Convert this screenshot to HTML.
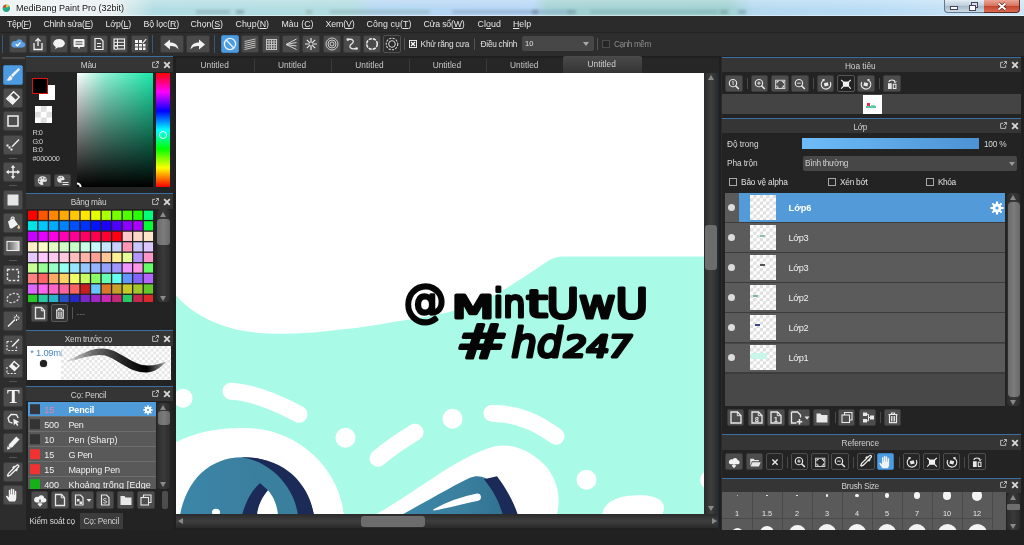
<!DOCTYPE html><html><head><meta charset="utf-8"><title>MediBang Paint Pro</title><style>
*{box-sizing:border-box;margin:0;padding:0}
html,body{width:1024px;height:545px;overflow:hidden;background:#2b2b2b;font-family:"Liberation Sans",sans-serif;font-size:11px;color:#d8d8d8}
.a{position:absolute}
.t{position:absolute;white-space:nowrap;line-height:1}
.btn{position:absolute;background:#4d4d4d;border-radius:2px;border:1px solid #3b3b3b}
.btn svg,.tb svg{position:absolute;left:-1px;top:-1px}
.tb{position:absolute;background:#4a4a4a;border-radius:2px;border:1px solid #383838}
.ptitle{position:absolute;background:#2e2e2e;border-top:1px solid #3f78a8;text-align:center;font-size:10px;color:#cfcfcf;line-height:13px;white-space:nowrap;height:14px}
.panel{position:absolute;background:#222}
u{text-decoration:underline}
</style></head><body><div style="position:absolute;left:0;top:0;width:1024px;height:545px;will-change:transform"><div class="a" style="left:0;top:0;width:1024px;height:15.500px;background:linear-gradient(90deg,#edf2f3 0,#e8eff1 11%,#cfe7ea 13%,#b2dde4 15%,#b1dce0 34.500%,#b4d6f2 36.500%,#b6d6f6 52%,#a2d1d3 53.500%,#9fd0d0 71%,#b4d9f0 73.500%,#b9dcf5 85%,#cde6f8 100%);overflow:hidden">
<div class="a" style="left:0;top:0;width:1024px;height:15.500px;background:linear-gradient(rgba(255,255,255,.25),rgba(255,255,255,0) 60%)"></div>
<div class="a" style="left:196px;top:10px;width:34px;height:3.500px;background:#86a4ac;opacity:.55;filter:blur(1.500px)"></div>
<div class="a" style="left:236px;top:10px;width:8px;height:3.500px;background:#6f8a92;opacity:.55;filter:blur(1.500px)"></div>
<div class="a" style="left:306px;top:10px;width:6px;height:3.500px;background:#8aa5a0;opacity:.55;filter:blur(1.500px)"></div>
<div class="a" style="left:330px;top:10px;width:100px;height:3.500px;background:#8fb2b8;opacity:.55;filter:blur(1.500px)"></div>
<div class="a" style="left:452px;top:10px;width:118px;height:3.500px;background:#8aa6c8;opacity:.55;filter:blur(1.500px)"></div>
<div class="a" style="left:532px;top:10px;width:6px;height:3.500px;background:#5a7088;opacity:.55;filter:blur(1.500px)"></div>
<div class="a" style="left:568px;top:10px;width:8px;height:3.500px;background:#5f8a90;opacity:.55;filter:blur(1.500px)"></div>
<div class="a" style="left:590px;top:10px;width:128px;height:3.500px;background:#7fb0b2;opacity:.55;filter:blur(1.500px)"></div>
<div class="a" style="left:720px;top:10px;width:8px;height:3.500px;background:#6a9092;opacity:.55;filter:blur(1.500px)"></div>
<div class="a" style="left:738px;top:10px;width:8px;height:3.500px;background:#6a9098;opacity:.55;filter:blur(1.500px)"></div>
<div class="a" style="left:0;top:14.500px;width:1024px;height:1px;background:rgba(255,255,255,.45)"></div>
<svg class="a" style="left:1px;top:2px" width="12" height="12" viewBox="0 0 12 12"><defs><linearGradient id="ai" x1="0" y1="0" x2="1" y2="1"><stop offset="0" stop-color="#35c070"/><stop offset="1" stop-color="#189a9a"/></linearGradient></defs><circle cx="5.500" cy="6" r="5" fill="#fff" opacity=".7"/><circle cx="5.300" cy="6.300" r="3.700" fill="url(#ai)"/><path d="M1.700 5.600A3.700 3.700 0 0 1 5 2.600L5.300 5.800Z" fill="#e0404c"/><path d="M5 2.600A3.700 3.700 0 0 1 8.300 4.300L5.300 5.800Z" fill="#f0d040"/></svg>
<div class="t" style="left:16.0px;top:3.8px;font-size:9.00px;color:#111;text-shadow:0 0 3px #fff,0 0 5px #fff;">MediBang Paint Pro (32bit)</div>
<div class="a" style="left:944px;top:0;width:19.500px;height:12.500px;border:1px solid #64788a;border-top:0;border-radius:0 0 0 4px;background:linear-gradient(#e4eef6,#bccddb 48%,#a3b9ca 52%,#cddce8)"><div class="a" style="left:5px;top:6px;width:8px;height:3.500px;background:#fff;border:1px solid #445"></div></div>
<div class="a" style="left:963px;top:0;width:21.500px;height:12.500px;border:1px solid #64788a;border-top:0;border-left:0;background:linear-gradient(#e4eef6,#bccddb 48%,#a3b9ca 52%,#cddce8)"><div class="a" style="left:8px;top:2px;width:7px;height:6px;background:#dde;border:1px solid #445"></div><div class="a" style="left:5.500px;top:4.500px;width:7px;height:6px;background:#fff;border:1px solid #445"></div></div>
<div class="a" style="left:984px;top:0;width:36px;height:12.500px;border:1px solid #5b2a22;border-top:0;border-left:0;border-radius:0 0 4px 0;background:linear-gradient(#eaa596,#d6735f 48%,#c2452e 52%,#da6a50)"><svg class="a" style="left:12.500px;top:2px" width="10" height="9" viewBox="0 0 10 9"><path d="M1.500 1.500l7 6M8.500 1.500l-7 6" stroke="#4a2020" stroke-width="3.200"/><path d="M1.500 1.500l7 6M8.500 1.500l-7 6" stroke="#fff" stroke-width="1.900"/></svg></div>
</div>
<div class="a" style="left:0;top:15.500px;width:1024px;height:17px;background:#2b2b2b"></div>
<div class="t" style="left:7.0px;top:19.9px;font-size:8.80px;color:#e6e6e6;letter-spacing:-0.40px;">Tệp(<u>F</u>)</div>
<div class="t" style="left:43.5px;top:19.9px;font-size:8.80px;color:#e6e6e6;letter-spacing:-0.24px;">Chỉnh sửa(<u>E</u>)</div>
<div class="t" style="left:105.5px;top:19.9px;font-size:8.80px;color:#e6e6e6;letter-spacing:-0.14px;">Lớp(<u>L</u>)</div>
<div class="t" style="left:143.5px;top:19.9px;font-size:8.80px;color:#e6e6e6;letter-spacing:-0.13px;">Bộ lọc(<u>R</u>)</div>
<div class="t" style="left:190.5px;top:19.9px;font-size:8.80px;color:#e6e6e6;letter-spacing:-0.04px;">Chọn(<u>S</u>)</div>
<div class="t" style="left:235.5px;top:19.9px;font-size:8.80px;color:#e6e6e6;letter-spacing:0.04px;">Chụp(<u>N</u>)</div>
<div class="t" style="left:281.5px;top:19.9px;font-size:8.80px;color:#e6e6e6;letter-spacing:0.03px;">Màu (<u>C</u>)</div>
<div class="t" style="left:325.5px;top:19.9px;font-size:8.80px;color:#e6e6e6;letter-spacing:-0.14px;">Xem(<u>V</u>)</div>
<div class="t" style="left:366.5px;top:19.9px;font-size:8.80px;color:#e6e6e6;letter-spacing:0.10px;">Công cụ(<u>T</u>)</div>
<div class="t" style="left:423.5px;top:19.9px;font-size:8.80px;color:#e6e6e6;letter-spacing:-0.23px;">Cửa sổ(<u>W</u>)</div>
<div class="t" style="left:477.5px;top:19.9px;font-size:8.80px;color:#e6e6e6;letter-spacing:0.10px;">Cl<u>o</u>ud</div>
<div class="t" style="left:513.0px;top:19.9px;font-size:8.80px;color:#e6e6e6;letter-spacing:-0.02px;"><u>H</u>elp</div>
<div class="a" style="left:0;top:32px;width:1024px;height:24px;background:#2d2d2d;border-top:1px solid #232323"></div>
<div class="a" style="left:2px;top:35px;width:1px;height:18px;background:#34597c"></div>
<div class="a" style="left:152px;top:35px;width:1px;height:18px;background:#34597c"></div>
<div class="a" style="left:214px;top:35px;width:1px;height:18px;background:#34597c"></div>
<div class="tb" style="left:9.0px;top:35px;width:18px;height:18px"><svg width="18" height="18" viewBox="0 0 18 18"><path d="M4.5 12.5h9a2.6 2.6 0 0 0 .4-5.2 3.6 3.6 0 0 0-6.8-1A3 3 0 0 0 4.5 12.500z" fill="#5aa0e6"/><path d="M6.8 9.2l1.6 1.6 3-3.200" stroke="#fff" stroke-width="1.400" fill="none"/></svg></div>
<div class="tb" style="left:29.2px;top:35px;width:18px;height:18px"><svg width="18" height="18" viewBox="0 0 18 18"><path d="M5 8v6.500h8V8" stroke="#f2f2f2" stroke-width="1.300" fill="none"/><path d="M9 11V4M6.500 6.200L9 3.600l2.500 2.600" stroke="#f2f2f2" stroke-width="1.300" fill="none"/></svg></div>
<div class="tb" style="left:49.5px;top:35px;width:18px;height:18px"><svg width="18" height="18" viewBox="0 0 18 18"><ellipse cx="9" cy="8.300" rx="5.800" ry="4.300" fill="#f2f2f2"/><path d="M6 11l-.8 3.200 3.400-2.400z" fill="#f2f2f2"/></svg></div>
<div class="tb" style="left:69.8px;top:35px;width:18px;height:18px"><svg width="18" height="18" viewBox="0 0 18 18"><rect x="3.500" y="4" width="11" height="8" rx="1" fill="#f2f2f2"/><path d="M8 12l1 2.200 1-2.200z" fill="#f2f2f2"/><path d="M5.500 6.800h7M5.500 9.200h7" stroke="#4a4a4a" stroke-width="1"/></svg></div>
<div class="tb" style="left:90.0px;top:35px;width:18px;height:18px"><svg width="18" height="18" viewBox="0 0 18 18"><path d="M5 3.500h5.500l2.500 2.500v8.500H5z" stroke="#f2f2f2" stroke-width="1.200" fill="none"/><path d="M7 8.500h4M7 11.500h4" stroke="#f2f2f2" stroke-width="1.100"/></svg></div>
<div class="tb" style="left:110.2px;top:35px;width:18px;height:18px"><svg width="18" height="18" viewBox="0 0 18 18"><rect x="4" y="4" width="10.500" height="10" stroke="#f2f2f2" stroke-width="1.100" fill="none"/><path d="M7.500 4v10M4 7.300h10.500M4 10.600h10.500" stroke="#f2f2f2" stroke-width="1"/><circle cx="6" cy="12.800" r="1.700" fill="#4a4a4a" stroke="#f2f2f2" stroke-width=".9"/></svg></div>
<div class="tb" style="left:130.5px;top:35px;width:18px;height:18px"><svg width="18" height="18" viewBox="0 0 18 18"><path d="M4 5h3v3H4zM8 5h3v3H8zM4 9h3v2.500H4zM8 9h3v2.500H8zM4 12.500h3V15H4zM8 12.500h3V15H8zM12 9h2.500v2.500H12zM12 12.500h2.500V15H12z" fill="#f2f2f2"/><path d="M11.500 7.500l3.200-3.800.9.800-3.200 3.700-1.300.5z" fill="#f2f2f2"/></svg></div>
<div class="tb" style="left:159.5px;top:35px;width:24px;height:18px"><svg width="24" height="18" viewBox="0 0 24 18"><path d="M4 9.500l6-5v3c5 0 8 2.500 8.500 7-1.800-2.600-4.500-3.600-8.500-3.400v3.400z" fill="#f2f2f2"/></svg></div>
<div class="tb" style="left:186px;top:35px;width:24px;height:18px"><svg width="24" height="18" viewBox="1 0 24 18"><path d="M20 9.500l-6-5v3c-5 0-8 2.500-8.500 7 1.800-2.600 4.500-3.600 8.500-3.400v3.400z" fill="#f2f2f2"/></svg></div>
<div class="tb" style="left:221.0px;top:35px;width:18px;height:18px;background:#4d9be0;border-color:#3f86c6;"><svg width="18" height="18" viewBox="0 0 18 18"><circle cx="9" cy="9" r="5.600" stroke="#eaf4ff" stroke-width="1.300" fill="none"/><path d="M5.200 5l7.600 8" stroke="#eaf4ff" stroke-width="1.300"/></svg></div>
<div class="tb" style="left:241.3px;top:35px;width:18px;height:18px;"><svg width="18" height="18" viewBox="0 0 18 18"><path d="M3.500 6.500l11-2.500M3.500 8.500l11-2.500M3.500 10.500l11-2.500M3.500 12.500l11-2.500M3.500 14.500l11-2.500" stroke="#d0d0d0" stroke-width=".9"/></svg></div>
<div class="tb" style="left:261.6px;top:35px;width:18px;height:18px;"><svg width="18" height="18" viewBox="0 0 18 18"><path d="M4.500 4v10.500M7 4v10.500M9.500 4v10.500M12 4v10.500M14.500 4v10.500M4 4.500h11M4 7h11M4 9.500h11M4 12h11M4 14.500h11" stroke="#c4c4c4" stroke-width="1"/></svg></div>
<div class="tb" style="left:281.9px;top:35px;width:18px;height:18px;"><svg width="18" height="18" viewBox="0 0 18 18"><path d="M4 9.500l10.500-5.500M4 9.500l10.500-2M4 9.500l10.500 1.500M4 9.500l10.500 5" stroke="#d6d6d6" stroke-width="1"/></svg></div>
<div class="tb" style="left:302.2px;top:35px;width:18px;height:18px;"><svg width="18" height="18" viewBox="0 0 18 18"><path d="M9 3v12M3 9h12M4.800 4.800l8.400 8.400M13.200 4.800l-8.400 8.400" stroke="#e8e8e8" stroke-width="1.200"/><circle cx="9" cy="9" r="1.600" fill="#4a4a4a"/></svg></div>
<div class="tb" style="left:322.5px;top:35px;width:18px;height:18px;"><svg width="18" height="18" viewBox="0 0 18 18"><circle cx="9" cy="9" r="6" stroke="#d8d8d8" stroke-width=".9" fill="none"/><circle cx="9" cy="9" r="4" stroke="#d8d8d8" stroke-width=".9" fill="none"/><circle cx="9" cy="9" r="2" stroke="#d8d8d8" stroke-width=".9" fill="none"/></svg></div>
<div class="tb" style="left:342.8px;top:35px;width:18px;height:18px;"><svg width="18" height="18" viewBox="0 0 18 18"><path d="M5 4.500c5-1 7 2 3.500 4.500s-1 6 5 4.500" stroke="#e8e8e8" stroke-width="1.300" fill="none"/><circle cx="4.800" cy="4.600" r="1.300" fill="#e8e8e8"/><circle cx="13.600" cy="13.500" r="1.300" fill="#e8e8e8"/></svg></div>
<div class="tb" style="left:363.1px;top:35px;width:18px;height:18px;"><svg width="18" height="18" viewBox="0 0 18 18"><circle cx="9" cy="9" r="5.300" stroke="#f0f0f0" stroke-width="1.500" fill="none" stroke-dasharray="3.200 1"/></svg></div>
<div class="tb" style="left:383.4px;top:35px;width:18px;height:18px;background:#2c2c2c;border-color:#505050;"><svg width="18" height="18" viewBox="0 0 18 18"><circle cx="9" cy="9" r="5.800" stroke="#d8d8d8" stroke-width="1.100" fill="none" stroke-dasharray="2.200 1.200"/><circle cx="9" cy="9" r="3.300" stroke="#d8d8d8" stroke-width="1" fill="none"/></svg></div>
<div class="a" style="left:404px;top:38px;width:1px;height:12px;background:#555"></div>
<div class="a" style="left:409px;top:40px;width:8px;height:8px;border:1px solid #e8e8e8;background:#2d2d2d"><svg class="a" style="left:0;top:0" width="6" height="6" viewBox="0 0 6 6"><path d="M1 1l4 4M5 1l-4 4" stroke="#fff" stroke-width="1.300"/></svg></div>
<div class="t" style="left:420.6px;top:40.1px;font-size:8.30px;color:#e0e0e0;letter-spacing:-0.23px;">Khử răng cưa</div>
<div class="a" style="left:474px;top:38px;width:1px;height:12px;background:#555"></div>
<div class="t" style="left:480.6px;top:40.1px;font-size:8.30px;color:#e0e0e0;letter-spacing:-0.27px;">Điều chỉnh</div>
<div class="a" style="left:522px;top:36px;width:72px;height:15px;background:#474747;border-radius:2px"><div class="t" style="left:3px;top:4px;font-size:7.5px;color:#e0e0e0">10</div><div class="a" style="left:61px;top:6px;border:3px solid transparent;border-top:4px solid #aaa;border-bottom:0"></div></div>
<div class="a" style="left:597px;top:38px;width:1px;height:12px;background:#555"></div>
<div class="a" style="left:602px;top:40px;width:8px;height:8px;border:1px solid #4a4a4a;background:#262626"></div>
<div class="t" style="left:614.0px;top:40.1px;font-size:8.30px;color:#8c8c8c;letter-spacing:-0.45px;">Cạnh mềm</div><div class="a" style="left:0;top:56px;width:26px;height:474px;background:#2d2d2d"></div>
<div class="a" style="left:2px;top:57px;width:23px;height:2px;background:#4a4a4a"></div>
<div class="a" style="left:26px;top:56px;width:147px;height:474px;background:#232323"></div>
<div class="btn" style="left:3px;top:64.5px;width:20px;height:20px;background:#4d9be0;border-color:#3c82c0;"><svg width="20" height="20" viewBox="0 0 20 20"><path d="M15.600 3l1.500 1.500-7.200 7.400-2-1.900z" fill="#f2f2f2"/><path d="M7.300 10.500l2.300 2.200c-.5 2.600-3.100 3.600-6.300 2.600 1.800-.7 1.800-3.100 4-4.800z" fill="#f2f2f2"/></svg></div>
<div class="btn" style="left:3px;top:87.9px;width:20px;height:20px;"><svg width="20" height="20" viewBox="0 0 20 20"><path d="M10.600 3.800l5.600 5.200-6.600 7-5.800-5.200z" fill="none" stroke="#f2f2f2" stroke-width="1.500"/><path d="M4.500 10.600l3.300-3.500 5.600 5.200-3.600 3.600z" fill="#f2f2f2"/></svg></div>
<div class="btn" style="left:3px;top:111.3px;width:20px;height:20px;"><svg width="20" height="20" viewBox="0 0 20 20"><rect x="5" y="5" width="10" height="10" fill="none" stroke="#e8e8e8" stroke-width="1.600"/></svg></div>
<div class="btn" style="left:3px;top:134.7px;width:20px;height:20px;"><svg width="20" height="20" viewBox="0 0 20 20"><path d="M15.500 4l1 1-6.500 6.800-1.600.5.600-1.500z" fill="#f2f2f2"/><rect x="3.500" y="9.500" width="2" height="2" fill="#f2f2f2"/><rect x="5.500" y="11.500" width="2" height="2" fill="#f2f2f2"/><rect x="7.500" y="13.500" width="2" height="2" fill="#f2f2f2"/></svg></div>
<div class="a" style="left:9px;top:157.9px;width:8px;height:1px;background:#555"></div>
<div class="btn" style="left:3px;top:161.5px;width:20px;height:20px;"><svg width="20" height="20" viewBox="0 0 20 20"><path d="M10 3l2.300 2.700h-1.600v3.600h3.600V7.700L17 10l-2.700 2.300v-1.600h-3.600v3.600h1.600L10 17l-2.300-2.700h1.600v-3.600H5.700v1.600L3 10l2.700-2.300v1.600h3.600V5.700H7.700z" fill="#f2f2f2"/></svg></div>
<div class="a" style="left:9px;top:184.7px;width:8px;height:1px;background:#555"></div>
<div class="btn" style="left:3px;top:189.5px;width:20px;height:20px;"><svg width="20" height="20" viewBox="0 0 20 20"><rect x="4.500" y="4.500" width="11" height="11" fill="#e6e6e6"/></svg></div>
<div class="btn" style="left:3px;top:212.9px;width:20px;height:20px;"><svg width="20" height="20" viewBox="0 0 20 20"><path d="M5 8.500l5.500-3.500 4.500 6.500-5.800 3.700c-1 .6-2 .3-2.600-.6z" fill="#f2f2f2"/><path d="M8.300 7.500c-1-3.500 2.300-5 3.200-1.800" stroke="#f2f2f2" stroke-width="1.100" fill="none"/><path d="M15.800 11.500c.9 1.600 1.300 2.500 1.300 3.100a1.300 1.300 0 0 1-2.600 0c0-.6.400-1.500 1.300-3.100z" fill="#e8c9a0"/></svg></div>
<div class="btn" style="left:3px;top:236.3px;width:20px;height:20px;"><svg width="20" height="20" viewBox="0 0 20 20"><defs><linearGradient id="gg" x1="0" y1="0" x2="1" y2="0"><stop offset="0" stop-color="#555"/><stop offset="1" stop-color="#ddd"/></linearGradient></defs><rect x="4" y="5.500" width="12" height="9" fill="url(#gg)" stroke="#e8e8e8" stroke-width="1.200"/></svg></div>
<div class="a" style="left:9px;top:259.5px;width:8px;height:1px;background:#555"></div>
<div class="btn" style="left:3px;top:264.5px;width:20px;height:20px;"><svg width="20" height="20" viewBox="0 0 20 20"><rect x="4.500" y="4.500" width="11" height="11" fill="none" stroke="#e0e0e0" stroke-width="1.400" stroke-dasharray="2.600 1.600"/></svg></div>
<div class="btn" style="left:3px;top:287.9px;width:20px;height:20px;"><svg width="20" height="20" viewBox="0 0 20 20"><ellipse cx="10" cy="10" rx="6.300" ry="4.300" transform="rotate(-22 10 10)" fill="none" stroke="#d8d8d8" stroke-width="1.300" stroke-dasharray="2.200 1.500"/></svg></div>
<div class="btn" style="left:3px;top:311.3px;width:20px;height:20px;"><svg width="20" height="20" viewBox="0 0 20 20"><path d="M4.500 15l7-7 1 1-7 7z" fill="#f2f2f2"/><path d="M13.500 3.500v2M13.500 8v2M10.700 6.800h2M14.700 6.800h2M11.500 4.800l1 1M15.500 4.800l-1 1M15.500 8.800l-1-1" stroke="#f2f2f2" stroke-width="1"/></svg></div>
<div class="btn" style="left:3px;top:334.7px;width:20px;height:20px;"><svg width="20" height="20" viewBox="0 0 20 20"><path d="M15.500 3.800l1 1-6.300 6.600-1.700.6.600-1.600z" fill="#f2f2f2"/><path d="M4 6.500h5M4 6.500v9h9.500v-4" fill="none" stroke="#e0e0e0" stroke-width="1.200" stroke-dasharray="2 1.400"/></svg></div>
<div class="btn" style="left:3px;top:358.1px;width:20px;height:20px;"><svg width="20" height="20" viewBox="0 0 20 20"><path d="M11.300 3.500l4.700 4.200-4.500 4.800-4.700-4.200z" fill="none" stroke="#f2f2f2" stroke-width="1.300"/><path d="M6.800 8.300l2.300-2.500 4.700 4.200-2.300 2.500z" fill="#f2f2f2"/><path d="M4 9v6.500h10" fill="none" stroke="#e0e0e0" stroke-width="1.200" stroke-dasharray="2 1.400"/></svg></div>
<div class="a" style="left:9px;top:381.3px;width:8px;height:1px;background:#555"></div>
<div class="btn" style="left:3px;top:386.5px;width:20px;height:20px;"><div class="t" style="left:3px;top:-1px;font-family:'Liberation Serif',serif;font-weight:bold;font-size:19px;color:#f2f2f2">T</div></div>
<div class="btn" style="left:3px;top:409.9px;width:20px;height:20px;"><svg width="20" height="20" viewBox="0 0 20 20"><path d="M9.500 13.200L6.300 12 5 8l3.300-3.700 5.200.4 1.700 3.300" fill="none" stroke="#f2f2f2" stroke-width="1.300" stroke-linejoin="round"/><path d="M10.300 8.800l6.200 3.200-2.500.8 1.400 2.500-1.300.7-1.400-2.500-1.900 1.800z" fill="#f2f2f2"/></svg></div>
<div class="btn" style="left:3px;top:433.3px;width:20px;height:20px;"><svg width="20" height="20" viewBox="0 0 20 20"><path d="M13.300 3.500l3.200 3-7.500 8-3.400.3.300-3.400z" fill="#f2f2f2"/><path d="M4 16.500l3.500-.5-3-3z" fill="#f2f2f2"/></svg></div>
<div class="a" style="left:9px;top:456.5px;width:8px;height:1px;background:#555"></div>
<div class="btn" style="left:3px;top:461.5px;width:20px;height:20px;"><svg width="20" height="20" viewBox="0 0 20 20"><path d="M13.800 3.300c1-1 2.700.7 1.700 1.700l-2 2 .7.700-1 1-.7-.7-5.300 5.300-2.200.9-.5-.5.900-2.200 5.300-5.300-.7-.7 1-1 .7.700z" fill="none" stroke="#f2f2f2" stroke-width="1.300"/></svg></div>
<div class="btn" style="left:3px;top:484.9px;width:20px;height:20px;"><svg width="20" height="20" viewBox="0 0 20 20"><path d="M6.300 16.500c-1.200-1.600-2.600-3.400-3.200-4.700-.4-.9.700-1.500 1.400-.7l1.300 1.500V5.500c0-1 1.500-1 1.500 0v4h.5V4.200c0-1 1.500-1 1.500 0v5.300h.5V4.800c0-1 1.500-1 1.500 0v5h.5V6.500c0-1 1.500-1 1.500 0v6c0 1.800-.5 2.800-1.300 4z" fill="#f2f2f2"/></svg></div>
<div class="a" style="left:26.0px;top:56.0px;width:147.0px;height:1px;background:#3a6f9f"></div><div class="a" style="left:26.0px;top:57.0px;width:147.0px;height:14.500px;background:#363535"></div><div class="t" style="left:80.8px;top:61.1px;font-size:8.30px;color:#d0d0d0;letter-spacing:-0.28px;">Màu</div><svg class="a" style="left:151.5px;top:60.5px" width="7" height="7" viewBox="0 0 8 8"><path d="M3.500 1.500H.7v5.800h5.800V4.500" fill="none" stroke="#bdbdbd" stroke-width="1.100"/><path d="M4.500 .5h3v3M7.300 .7L4 4" fill="none" stroke="#bdbdbd" stroke-width="1.100"/></svg><svg class="a" style="left:163.0px;top:60.5px" width="8" height="8" viewBox="0 0 8 8"><path d="M1.200 1.200l5.600 5.600M6.800 1.200L1.200 6.800" stroke="#d8d8d8" stroke-width="1.800"/></svg>
<div class="a" style="left:39px;top:84.500px;width:15.500px;height:15.500px;background:#fff"></div>
<div class="a" style="left:32px;top:77.700px;width:16.300px;height:16.300px;background:#000;border:1.500px solid #e01010"></div>
<div class="a" style="left:34.700px;top:105.600px;width:17.500px;height:17.300px;background:#fff;background-image:linear-gradient(45deg,#ddd 25%,transparent 25%,transparent 75%,#ddd 75%),linear-gradient(45deg,#ddd 25%,transparent 25%,transparent 75%,#ddd 75%);background-size:11.600px 11.600px;background-position:0 0,5.800px 5.800px"></div>
<div class="t" style="left:32.4px;top:129.2px;font-size:7.30px;color:#d0d0d0;letter-spacing:-0.45px;">R:0</div>
<div class="t" style="left:32.4px;top:137.7px;font-size:7.30px;color:#d0d0d0;letter-spacing:-0.49px;">G:0</div>
<div class="t" style="left:32.4px;top:145.9px;font-size:7.30px;color:#d0d0d0;letter-spacing:-0.32px;">B:0</div>
<div class="t" style="left:32.4px;top:154.5px;font-size:7.30px;color:#d0d0d0;letter-spacing:-0.15px;">#000000</div>
<div class="btn" style="left:33.800px;top:174px;width:17px;height:13px"><svg width="17" height="13" viewBox="0 0 17 13" style="left:-1px;top:-1px"><path d="M8.500 2.300a4.700 4.300 0 1 0 0 8.600c1.200 0 1-1.200.5-1.700-.6-.7 0-1.500.9-1.500h1.400c1 0 1.600-.6 1.600-1.500 0-2.300-2-3.900-4.400-3.900z" fill="#e8e8e8"/><circle cx="6" cy="5" r=".8" fill="#4d4d4d"/><circle cx="8.500" cy="4" r=".8" fill="#4d4d4d"/><circle cx="5.500" cy="7.500" r=".8" fill="#4d4d4d"/><circle cx="11" cy="5" r=".8" fill="#4d4d4d"/></svg></div>
<div class="btn" style="left:54px;top:174px;width:17px;height:13px"><svg width="17" height="13" viewBox="0 0 17 13" style="left:-1px;top:-1px"><path d="M7 1.800a3.800 3.500 0 1 0 0 7c1 0 .8-1 .4-1.400-.5-.6 0-1.200.7-1.200h1.200c.8 0 1.300-.5 1.300-1.200 0-1.900-1.600-3.200-3.600-3.200z" fill="#e8e8e8"/><circle cx="5" cy="4" r=".7" fill="#4d4d4d"/><circle cx="7.200" cy="3.300" r=".7" fill="#4d4d4d"/><path d="M8.500 8.500h6M8.500 10.500h6" stroke="#e8e8e8" stroke-width="1.200"/></svg></div>
<div class="a" style="left:76.500px;top:72.800px;width:76.600px;height:114.600px;background:linear-gradient(to top,#000,rgba(0,0,0,0)),linear-gradient(to right,#fff 0%,#8df2d4 38%,#1ce8aa 100%)"></div>
<svg class="a" style="left:76.500px;top:179.400px" width="8" height="8" viewBox="0 0 8 8"><circle cx="0" cy="8" r="3.600" fill="none" stroke="#fff" stroke-width="2"/></svg>
<div class="a" style="left:155.600px;top:72.800px;width:14.600px;height:114.600px;background:linear-gradient(to bottom,#ff0000 0%,#ff00ff 16.600%,#0000ff 33.300%,#00ffff 50%,#00ff00 66.600%,#ffff00 83.300%,#ff0000 100%)"></div>
<div class="a" style="left:158.800px;top:131.300px;width:8px;height:8px;border-radius:50%;border:1.600px solid #fff;background:rgba(0,255,220,.2)"></div>
<div class="a" style="left:26.0px;top:193.0px;width:147.0px;height:1px;background:#3a6f9f"></div><div class="a" style="left:26.0px;top:194.0px;width:147.0px;height:14.500px;background:#363535"></div><div class="t" style="left:70.8px;top:198.0px;font-size:8.30px;color:#d0d0d0;letter-spacing:-0.30px;">Bảng màu</div><svg class="a" style="left:151.5px;top:197.5px" width="7" height="7" viewBox="0 0 8 8"><path d="M3.500 1.500H.7v5.800h5.800V4.500" fill="none" stroke="#bdbdbd" stroke-width="1.100"/><path d="M4.500 .5h3v3M7.300 .7L4 4" fill="none" stroke="#bdbdbd" stroke-width="1.100"/></svg><svg class="a" style="left:163.0px;top:197.5px" width="8" height="8" viewBox="0 0 8 8"><path d="M1.200 1.200l5.600 5.600M6.800 1.200L1.200 6.800" stroke="#d8d8d8" stroke-width="1.800"/></svg>
<svg class="a" style="left:26px;top:208px" width="131" height="94" viewBox="0 0 131 94">
<rect x="2.00" y="2.70" width="9.200" height="9.200" fill="#ff0000"/>
<rect x="12.53" y="2.70" width="9.200" height="9.200" fill="#ff5500"/>
<rect x="23.06" y="2.70" width="9.200" height="9.200" fill="#ff8800"/>
<rect x="33.59" y="2.70" width="9.200" height="9.200" fill="#ffaa00"/>
<rect x="44.12" y="2.70" width="9.200" height="9.200" fill="#ffc800"/>
<rect x="54.65" y="2.70" width="9.200" height="9.200" fill="#ffe600"/>
<rect x="65.18" y="2.70" width="9.200" height="9.200" fill="#e6ff00"/>
<rect x="75.71" y="2.70" width="9.200" height="9.200" fill="#aaff00"/>
<rect x="86.24" y="2.70" width="9.200" height="9.200" fill="#78ff00"/>
<rect x="96.77" y="2.70" width="9.200" height="9.200" fill="#50ff00"/>
<rect x="107.30" y="2.70" width="9.200" height="9.200" fill="#28ff00"/>
<rect x="117.83" y="2.70" width="9.200" height="9.200" fill="#00ff78"/>
<rect x="2.00" y="13.23" width="9.200" height="9.200" fill="#00e6e6"/>
<rect x="12.53" y="13.23" width="9.200" height="9.200" fill="#00c8ff"/>
<rect x="23.06" y="13.23" width="9.200" height="9.200" fill="#00aaff"/>
<rect x="33.59" y="13.23" width="9.200" height="9.200" fill="#0082ff"/>
<rect x="44.12" y="13.23" width="9.200" height="9.200" fill="#0050ff"/>
<rect x="54.65" y="13.23" width="9.200" height="9.200" fill="#0032ff"/>
<rect x="65.18" y="13.23" width="9.200" height="9.200" fill="#0014ff"/>
<rect x="75.71" y="13.23" width="9.200" height="9.200" fill="#1e00ff"/>
<rect x="86.24" y="13.23" width="9.200" height="9.200" fill="#5000ff"/>
<rect x="96.77" y="13.23" width="9.200" height="9.200" fill="#8c00ff"/>
<rect x="107.30" y="13.23" width="9.200" height="9.200" fill="#aa00ff"/>
<rect x="117.83" y="13.23" width="9.200" height="9.200" fill="#00ff32"/>
<rect x="2.00" y="23.76" width="9.200" height="9.200" fill="#c800ff"/>
<rect x="12.53" y="23.76" width="9.200" height="9.200" fill="#e600ff"/>
<rect x="23.06" y="23.76" width="9.200" height="9.200" fill="#ff00e6"/>
<rect x="33.59" y="23.76" width="9.200" height="9.200" fill="#ff00b4"/>
<rect x="44.12" y="23.76" width="9.200" height="9.200" fill="#ff0096"/>
<rect x="54.65" y="23.76" width="9.200" height="9.200" fill="#ff0064"/>
<rect x="65.18" y="23.76" width="9.200" height="9.200" fill="#ff0050"/>
<rect x="75.71" y="23.76" width="9.200" height="9.200" fill="#ff0032"/>
<rect x="86.24" y="23.76" width="9.200" height="9.200" fill="#ff0014"/>
<rect x="96.77" y="23.76" width="9.200" height="9.200" fill="#ffc8c8"/>
<rect x="107.30" y="23.76" width="9.200" height="9.200" fill="#ffd7c8"/>
<rect x="117.83" y="23.76" width="9.200" height="9.200" fill="#ffe6c8"/>
<rect x="2.00" y="34.29" width="9.200" height="9.200" fill="#fff0c8"/>
<rect x="12.53" y="34.29" width="9.200" height="9.200" fill="#ffffc8"/>
<rect x="23.06" y="34.29" width="9.200" height="9.200" fill="#e6ffc8"/>
<rect x="33.59" y="34.29" width="9.200" height="9.200" fill="#d2ffc8"/>
<rect x="44.12" y="34.29" width="9.200" height="9.200" fill="#c8ffc8"/>
<rect x="54.65" y="34.29" width="9.200" height="9.200" fill="#c8ffe6"/>
<rect x="65.18" y="34.29" width="9.200" height="9.200" fill="#c8ffff"/>
<rect x="75.71" y="34.29" width="9.200" height="9.200" fill="#c8e6ff"/>
<rect x="86.24" y="34.29" width="9.200" height="9.200" fill="#c8d2ff"/>
<rect x="96.77" y="34.29" width="9.200" height="9.200" fill="#ff96b4"/>
<rect x="107.30" y="34.29" width="9.200" height="9.200" fill="#c8c8ff"/>
<rect x="117.83" y="34.29" width="9.200" height="9.200" fill="#dcc8ff"/>
<rect x="2.00" y="44.82" width="9.200" height="9.200" fill="#e6c8ff"/>
<rect x="12.53" y="44.82" width="9.200" height="9.200" fill="#ffc8ff"/>
<rect x="23.06" y="44.82" width="9.200" height="9.200" fill="#ffc8f0"/>
<rect x="33.59" y="44.82" width="9.200" height="9.200" fill="#ffc8dc"/>
<rect x="44.12" y="44.82" width="9.200" height="9.200" fill="#ffbebe"/>
<rect x="54.65" y="44.82" width="9.200" height="9.200" fill="#ffb4aa"/>
<rect x="65.18" y="44.82" width="9.200" height="9.200" fill="#ffa096"/>
<rect x="75.71" y="44.82" width="9.200" height="9.200" fill="#ffc896"/>
<rect x="86.24" y="44.82" width="9.200" height="9.200" fill="#fff096"/>
<rect x="96.77" y="44.82" width="9.200" height="9.200" fill="#e6ff96"/>
<rect x="107.30" y="44.82" width="9.200" height="9.200" fill="#b496ff"/>
<rect x="117.83" y="44.82" width="9.200" height="9.200" fill="#ff96c8"/>
<rect x="2.00" y="55.35" width="9.200" height="9.200" fill="#c8ff96"/>
<rect x="12.53" y="55.35" width="9.200" height="9.200" fill="#96ff96"/>
<rect x="23.06" y="55.35" width="9.200" height="9.200" fill="#96ffc8"/>
<rect x="33.59" y="55.35" width="9.200" height="9.200" fill="#96fff0"/>
<rect x="44.12" y="55.35" width="9.200" height="9.200" fill="#96e6ff"/>
<rect x="54.65" y="55.35" width="9.200" height="9.200" fill="#96c8ff"/>
<rect x="65.18" y="55.35" width="9.200" height="9.200" fill="#96b4ff"/>
<rect x="75.71" y="55.35" width="9.200" height="9.200" fill="#96a0ff"/>
<rect x="86.24" y="55.35" width="9.200" height="9.200" fill="#a096ff"/>
<rect x="96.77" y="55.35" width="9.200" height="9.200" fill="#f096ff"/>
<rect x="107.30" y="55.35" width="9.200" height="9.200" fill="#ff96e6"/>
<rect x="117.83" y="55.35" width="9.200" height="9.200" fill="#64ff64"/>
<rect x="2.00" y="65.88" width="9.200" height="9.200" fill="#ff8282"/>
<rect x="12.53" y="65.88" width="9.200" height="9.200" fill="#ff6464"/>
<rect x="23.06" y="65.88" width="9.200" height="9.200" fill="#ffaa64"/>
<rect x="33.59" y="65.88" width="9.200" height="9.200" fill="#ffd264"/>
<rect x="44.12" y="65.88" width="9.200" height="9.200" fill="#f0ff64"/>
<rect x="54.65" y="65.88" width="9.200" height="9.200" fill="#c8ff64"/>
<rect x="65.18" y="65.88" width="9.200" height="9.200" fill="#8cff64"/>
<rect x="75.71" y="65.88" width="9.200" height="9.200" fill="#64ffb4"/>
<rect x="86.24" y="65.88" width="9.200" height="9.200" fill="#64fff0"/>
<rect x="96.77" y="65.88" width="9.200" height="9.200" fill="#6496ff"/>
<rect x="107.30" y="65.88" width="9.200" height="9.200" fill="#8264ff"/>
<rect x="117.83" y="65.88" width="9.200" height="9.200" fill="#b464ff"/>
<rect x="2.00" y="76.41" width="9.200" height="9.200" fill="#dc64ff"/>
<rect x="12.53" y="76.41" width="9.200" height="9.200" fill="#ff64f0"/>
<rect x="23.06" y="76.41" width="9.200" height="9.200" fill="#ff64c8"/>
<rect x="33.59" y="76.41" width="9.200" height="9.200" fill="#ff64a0"/>
<rect x="44.12" y="76.41" width="9.200" height="9.200" fill="#ff6464"/>
<rect x="54.65" y="76.41" width="9.200" height="9.200" fill="#c81e1e"/>
<rect x="65.18" y="76.41" width="9.200" height="9.200" fill="#64c8ff"/>
<rect x="75.71" y="76.41" width="9.200" height="9.200" fill="#dc7828"/>
<rect x="86.24" y="76.41" width="9.200" height="9.200" fill="#c8a028"/>
<rect x="96.77" y="76.41" width="9.200" height="9.200" fill="#c8c828"/>
<rect x="107.30" y="76.41" width="9.200" height="9.200" fill="#a0c828"/>
<rect x="117.83" y="76.41" width="9.200" height="9.200" fill="#64c828"/>
<rect x="2.00" y="86.94" width="9.200" height="9.200" fill="#28c828"/>
<rect x="12.53" y="86.94" width="9.200" height="9.200" fill="#28c8a0"/>
<rect x="23.06" y="86.94" width="9.200" height="9.200" fill="#28b4c8"/>
<rect x="33.59" y="86.94" width="9.200" height="9.200" fill="#2850c8"/>
<rect x="44.12" y="86.94" width="9.200" height="9.200" fill="#2828c8"/>
<rect x="54.65" y="86.94" width="9.200" height="9.200" fill="#7828c8"/>
<rect x="65.18" y="86.94" width="9.200" height="9.200" fill="#a028c8"/>
<rect x="75.71" y="86.94" width="9.200" height="9.200" fill="#c828b4"/>
<rect x="86.24" y="86.94" width="9.200" height="9.200" fill="#c82878"/>
<rect x="96.77" y="86.94" width="9.200" height="9.200" fill="#28c864"/>
<rect x="107.30" y="86.94" width="9.200" height="9.200" fill="#c82850"/>
<rect x="117.83" y="86.94" width="9.200" height="9.200" fill="#dc2828"/>
</svg>
<div class="a" style="left:157px;top:209px;width:13px;height:93px;background:linear-gradient(90deg,#2c2c2c,#3a3a3a 50%,#2c2c2c);border-radius:4px"></div>
<div class="a" style="left:160.0px;top:212.0px;border:3.500px solid transparent;border-bottom:5px solid #8a8a8a;border-top:0"></div>
<div class="a" style="left:160.0px;top:295.5px;border:3.500px solid transparent;border-top:5px solid #8a8a8a;border-bottom:0"></div>
<div class="a" style="left:156.800px;top:219px;width:13px;height:25.500px;background:linear-gradient(90deg,#6a6a6a,#7c7c7c 50%,#686868);border-radius:3px"></div>
<div class="btn" style="left:30.600px;top:304.400px;width:17.400px;height:17.400px"><svg width="18" height="18" viewBox="0 0 18 18"><path d="M4.500 3.500h6l3 3V14.500H4.500z" fill="none" stroke="#e8e8e8" stroke-width="1.300"/><path d="M10.300 3.500v3.300h3.200" fill="none" stroke="#e8e8e8" stroke-width="1"/></svg></div>
<div class="btn" style="left:51.300px;top:304.400px;width:17px;height:17.400px;border-color:#5a5a5a;background:#333"><svg width="18" height="18" viewBox="0 0 18 18"><path d="M5 6h8M7.500 6V4.500h3V6M5.800 6.200v8h6.400v-8" fill="none" stroke="#e8e8e8" stroke-width="1.200"/><path d="M7.700 7.500v5.500M9 7.500v5.500M10.300 7.500v5.500" stroke="#e8e8e8" stroke-width=".9"/></svg></div>
<div class="a" style="left:72.300px;top:307px;width:1px;height:12px;background:#555"></div>
<div class="t" style="left:76.6px;top:309.5px;font-size:8.00px;color:#8a8a8a;letter-spacing:0.17px;">---</div>
<div class="a" style="left:26.0px;top:330.0px;width:147.0px;height:1px;background:#3a6f9f"></div><div class="a" style="left:26.0px;top:331.0px;width:147.0px;height:14.500px;background:#363535"></div><div class="t" style="left:64.8px;top:335.1px;font-size:8.30px;color:#d0d0d0;letter-spacing:-0.27px;">Xem trước cọ</div><svg class="a" style="left:151.5px;top:334.5px" width="7" height="7" viewBox="0 0 8 8"><path d="M3.500 1.500H.7v5.800h5.800V4.500" fill="none" stroke="#bdbdbd" stroke-width="1.100"/><path d="M4.500 .5h3v3M7.300 .7L4 4" fill="none" stroke="#bdbdbd" stroke-width="1.100"/></svg><svg class="a" style="left:163.0px;top:334.5px" width="8" height="8" viewBox="0 0 8 8"><path d="M1.200 1.200l5.600 5.600M6.800 1.200L1.200 6.800" stroke="#d8d8d8" stroke-width="1.800"/></svg>
<div class="a" style="left:26.600px;top:346.300px;width:34.600px;height:33.700px;background:#fff"></div>
<div class="a" style="left:61.200px;top:346.300px;width:110.300px;height:33.700px;background:#fff;background-image:linear-gradient(45deg,#e4e4e4 25%,transparent 25%,transparent 75%,#e4e4e4 75%),linear-gradient(45deg,#e4e4e4 25%,transparent 25%,transparent 75%,#e4e4e4 75%);background-size:5.600px 5.600px;background-position:0 0,2.800px 2.800px"></div>
<div class="a" style="left:26.600px;top:346.300px;width:35px;height:13px;overflow:hidden"><div class="t" style="left:3.6px;top:1.7px;font-size:9.40px;color:#4a86c4;letter-spacing:-0.22px;">* 1.09mm</div></div>
<div class="a" style="left:40.400px;top:360.100px;width:7px;height:7px;border-radius:50%;background:#222;box-shadow:0 0 1px #222"></div>
<svg class="a" style="left:61px;top:346px" width="111" height="34" viewBox="61 346 111 34"><defs><linearGradient id="bs" x1="0" y1="0" x2="1" y2="0"><stop offset="0" stop-color="#000" stop-opacity=".12"/><stop offset=".25" stop-color="#000" stop-opacity=".55"/><stop offset=".55" stop-color="#000" stop-opacity=".85"/><stop offset=".8" stop-color="#000" stop-opacity="1"/><stop offset="1" stop-color="#000" stop-opacity=".3"/></linearGradient><filter id="bb" x="-5%" y="-20%" width="110%" height="140%"><feGaussianBlur stdDeviation=".6"/></filter></defs><path filter="url(#bb)" d="M68 360.500 C80 355 90 348.500 102 348.500 C112 348.500 118 353 126 357.500 C134 362 140 365.500 148 365.500 C155 365.500 161 363.500 166.500 361.500 C161 367 155 372.500 146 372.500 C136 372.500 128 368 120 363 C112 358 107 355 100 355 C90 355 80 359 68 361.500Z" fill="url(#bs)"/></svg>
<div class="a" style="left:26.0px;top:385.5px;width:147.0px;height:1px;background:#3a6f9f"></div><div class="a" style="left:26.0px;top:386.5px;width:147.0px;height:14.500px;background:#363535"></div><div class="t" style="left:70.8px;top:390.6px;font-size:8.30px;color:#d0d0d0;letter-spacing:-0.24px;">Cọ: Pencil</div><svg class="a" style="left:151.5px;top:390.0px" width="7" height="7" viewBox="0 0 8 8"><path d="M3.500 1.500H.7v5.800h5.800V4.500" fill="none" stroke="#bdbdbd" stroke-width="1.100"/><path d="M4.500 .5h3v3M7.300 .7L4 4" fill="none" stroke="#bdbdbd" stroke-width="1.100"/></svg><svg class="a" style="left:163.0px;top:390.0px" width="8" height="8" viewBox="0 0 8 8"><path d="M1.200 1.200l5.600 5.600M6.800 1.200L1.200 6.800" stroke="#d8d8d8" stroke-width="1.800"/></svg>
<div class="a" style="left:28px;top:402.300px;width:127.600px;height:86.700px;overflow:hidden;background:repeating-linear-gradient(to bottom,#595959 0,#595959 14.200px,#6d6d6d 14.300px,#6d6d6d 14.850px,#595959 14.950px)">
<div class="a" style="left:0;top:0;width:128px;height:14.500px;background:linear-gradient(to bottom,#4f9ad9 0,#4f9ad9 14.300px,rgba(79,154,217,0) 14.500px)"></div>
<div class="a" style="left:0;top:0.00px;width:128px;height:14.400px">
<svg class="a" style="left:0;top:0" width="14" height="14"><rect x="2" y="2.200" width="10" height="10" fill="#33373d"/></svg>
<div class="t" style="left:16.2px;top:3.9px;font-size:9.00px;color:#e58aa0;letter-spacing:0.10px;">15</div>
<div class="t" style="left:40.4px;top:3.9px;font-size:9.00px;color:#fff;font-weight:bold;letter-spacing:-0.12px;">Pencil</div>
<svg class="a" style="left:115px;top:2.500px" width="10" height="10" viewBox="0 0 10 10"><circle cx="5" cy="5" r="2.300" fill="none" stroke="#fff" stroke-width="1.800"/><path d="M5 .3v9.400M.3 5h9.400M1.700 1.700l6.600 6.600M8.300 1.700L1.700 8.300" stroke="#fff" stroke-width="1.500"/><circle cx="5" cy="5" r="1.100" fill="#4f9ad9"/></svg>
</div>
<div class="a" style="left:0;top:14.95px;width:128px;height:14.400px">
<svg class="a" style="left:0;top:0" width="14" height="14"><rect x="2" y="2.200" width="10" height="10" fill="#333"/></svg>
<div class="t" style="left:16.2px;top:3.9px;font-size:9.00px;color:#f0f0f0;letter-spacing:-0.07px;">500</div>
<div class="t" style="left:40.4px;top:3.9px;font-size:9.00px;color:#f0f0f0;letter-spacing:-0.37px;">Pen</div>
</div>
<div class="a" style="left:0;top:29.90px;width:128px;height:14.400px">
<svg class="a" style="left:0;top:0" width="14" height="14"><rect x="2" y="2.200" width="10" height="10" fill="#333"/></svg>
<div class="t" style="left:16.2px;top:3.9px;font-size:9.00px;color:#f0f0f0;letter-spacing:0.10px;">10</div>
<div class="t" style="left:40.4px;top:3.9px;font-size:9.00px;color:#f0f0f0;letter-spacing:0.06px;">Pen (Sharp)</div>
</div>
<div class="a" style="left:0;top:44.85px;width:128px;height:14.400px">
<svg class="a" style="left:0;top:0" width="14" height="14"><rect x="2" y="2.200" width="10" height="10" fill="#f03232"/></svg>
<div class="t" style="left:16.2px;top:3.9px;font-size:9.00px;color:#f0f0f0;letter-spacing:0.10px;">15</div>
<div class="t" style="left:40.4px;top:3.9px;font-size:9.00px;color:#f0f0f0;letter-spacing:-0.32px;">G Pen</div>
</div>
<div class="a" style="left:0;top:59.80px;width:128px;height:14.400px">
<svg class="a" style="left:0;top:0" width="14" height="14"><rect x="2" y="2.200" width="10" height="10" fill="#f03232"/></svg>
<div class="t" style="left:16.2px;top:3.9px;font-size:9.00px;color:#f0f0f0;letter-spacing:0.10px;">15</div>
<div class="t" style="left:40.4px;top:3.9px;font-size:9.00px;color:#f0f0f0;letter-spacing:-0.13px;">Mapping Pen</div>
</div>
<div class="a" style="left:0;top:74.75px;width:128px;height:14.400px">
<svg class="a" style="left:0;top:0" width="14" height="14"><rect x="2" y="2.200" width="10" height="10" fill="#18b018"/></svg>
<div class="t" style="left:16.2px;top:3.9px;font-size:9.00px;color:#f0f0f0;letter-spacing:-0.07px;">400</div>
<div class="t" style="left:40.4px;top:3.9px;font-size:9.00px;color:#f0f0f0;letter-spacing:0.14px;">Khoảng trống [Edge</div>
</div>
</div>
<div class="a" style="left:157px;top:402.500px;width:13px;height:86.500px;background:linear-gradient(90deg,#2c2c2c,#3a3a3a 50%,#2c2c2c);border-radius:4px"></div>
<div class="a" style="left:160.0px;top:404.5px;border:3.500px solid transparent;border-bottom:5px solid #8a8a8a;border-top:0"></div>
<div class="a" style="left:160.0px;top:482.0px;border:3.500px solid transparent;border-top:5px solid #8a8a8a;border-bottom:0"></div>
<div class="a" style="left:157.500px;top:411.400px;width:12px;height:14px;background:linear-gradient(90deg,#6a6a6a,#7c7c7c 50%,#686868);border-radius:3px"></div>
<div class="btn" style="left:30.5px;top:491px;width:17.5px;height:17.500px"><svg width="18" height="18" viewBox="0 0 18 18"><path d="M5 11.500h8a2.300 2.300 0 0 0 .3-4.600 3.200 3.200 0 0 0-6-.9A2.700 2.700 0 0 0 5 11.500z" fill="#f2f2f2"/><path d="M9 9v5.500M7 12.500l2 2.300 2-2.300" stroke="#f2f2f2" stroke-width="1.400" fill="none"/><path d="M9 8.500v3" stroke="#4d4d4d" stroke-width="1.400"/></svg></div>
<div class="btn" style="left:51.0px;top:491px;width:17.5px;height:17.500px"><svg width="18" height="18" viewBox="0 0 18 18"><path d="M4.500 3.500h6l3 3V14.500H4.500z" fill="none" stroke="#e8e8e8" stroke-width="1.300"/><path d="M10.300 3.500v3.300h3.200" fill="none" stroke="#e8e8e8" stroke-width="1"/></svg></div>
<div class="btn" style="left:71.2px;top:491px;width:23.0px;height:17.500px"><svg width="24" height="18" viewBox="0 0 24 18"><path d="M4.500 4h5l2.500 2.500V14H4.500z" fill="none" stroke="#e8e8e8" stroke-width="1.200"/><rect x="6" y="8" width="2.500" height="2.500" fill="#e8e8e8"/><rect x="8.500" y="10.500" width="2.500" height="2.500" fill="#e8e8e8"/><path d="M15.500 8h5l-2.500 3z" fill="#e8e8e8"/></svg></div>
<div class="btn" style="left:96.3px;top:491px;width:17.5px;height:17.500px"><svg width="18" height="18" viewBox="0 0 18 18"><path d="M5.500 4h5l2.500 2.500V14H5.500z" fill="none" stroke="#e8e8e8" stroke-width="1.200"/><path d="M10.500 8c-1.500-1-3.200-.3-3 .8.300 1.500 3 .6 3.100 2.100.1 1.200-1.900 1.600-3.300.6" fill="none" stroke="#e8e8e8" stroke-width="1"/></svg></div>
<div class="btn" style="left:116.7px;top:491px;width:17.5px;height:17.500px"><svg width="18" height="18" viewBox="0 0 18 18"><path d="M3.500 5h4l1 1.500h6v7.500h-11z" fill="#e8e8e8"/></svg></div>
<div class="btn" style="left:137.0px;top:491px;width:17.5px;height:17.500px"><svg width="18" height="18" viewBox="0 0 18 18"><rect x="4" y="6.500" width="7.500" height="7.500" fill="none" stroke="#e8e8e8" stroke-width="1.100"/><path d="M6.500 6.500V4H14v7.500h-2.500" fill="none" stroke="#e8e8e8" stroke-width="1.100"/></svg></div>
<div class="a" style="left:162px;top:491px;width:6px;height:17.500px;background:#4d4d4d;border-radius:2px"></div>
<div class="a" style="left:26px;top:511px;width:147px;height:19px;background:#232323"></div>
<div class="a" style="left:80px;top:513px;width:43px;height:16px;background:#3c3c3c"></div>
<div class="t" style="left:29.5px;top:516.9px;font-size:8.30px;color:#d8d8d8;letter-spacing:-0.21px;">Kiểm soát cọ</div>
<div class="t" style="left:83.5px;top:517.4px;font-size:8.30px;color:#d0d0d0;letter-spacing:-0.23px;">Cọ: Pencil</div>
<div class="a" style="left:0;top:530px;width:1024px;height:15px;background:#212121"></div><div class="a" style="left:173px;top:56px;width:548px;height:474px;background:#1f1f1f"></div>
<div class="a" style="left:176px;top:58px;width:543px;height:15px;background:#262626"></div>
<div class="a" style="left:253.9px;top:59px;width:1px;height:13px;background:#3a3a3a"></div>
<div class="t" style="left:200.5px;top:61.4px;font-size:8.30px;color:#c8c8c8;letter-spacing:0.03px;">Untitled</div>
<div class="a" style="left:331.3px;top:59px;width:1px;height:13px;background:#3a3a3a"></div>
<div class="t" style="left:277.9px;top:61.4px;font-size:8.30px;color:#c8c8c8;letter-spacing:0.03px;">Untitled</div>
<div class="a" style="left:408.7px;top:59px;width:1px;height:13px;background:#3a3a3a"></div>
<div class="t" style="left:355.3px;top:61.4px;font-size:8.30px;color:#c8c8c8;letter-spacing:0.03px;">Untitled</div>
<div class="a" style="left:486.1px;top:59px;width:1px;height:13px;background:#3a3a3a"></div>
<div class="t" style="left:432.7px;top:61.4px;font-size:8.30px;color:#c8c8c8;letter-spacing:0.03px;">Untitled</div>
<div class="a" style="left:563.5px;top:59px;width:1px;height:13px;background:#3a3a3a"></div>
<div class="t" style="left:510.1px;top:61.4px;font-size:8.30px;color:#c8c8c8;letter-spacing:0.03px;">Untitled</div>
<div class="a" style="left:563.400px;top:56px;width:78.200px;height:16.700px;background:linear-gradient(#4a4a4a,#343434);border-radius:2px 2px 0 0"></div>
<div class="t" style="left:587.5px;top:60.4px;font-size:8.30px;color:#d0d0d0;letter-spacing:0.03px;">Untitled</div>
<svg class="a" style="left:176px;top:72.700px" width="528" height="441.700" viewBox="176 72.700 528 441.700">
<defs><linearGradient id="tl" x1="0" y1="0" x2="1" y2="0"><stop offset="0" stop-color="#3a86a8"/><stop offset=".6" stop-color="#3a7f9e"/><stop offset="1" stop-color="#2f6f8e"/></linearGradient><filter id="sf" x="-5%" y="-5%" width="110%" height="110%"><feGaussianBlur stdDeviation="0.700"/></filter></defs>
<rect x="176" y="72" width="528" height="443" fill="#fff"/>
<path d="M176 295 C190 312 215 325 240 330 C265 335 300 334 326 331 C350 328.500 370 326 389 322.500 C410 319 430 316 446 312.500 C456 310 464 308 470 306 C492 298 520 280 546 262 Q553 257 562 256.300 L704 256.300 L704 515 L176 515Z" fill="#a9fbe7"/>
<g filter="url(#sf)">
<circle cx="183" cy="398" r="9.500" fill="#fff"/>
<path d="M231 391 C255 392 280 404 299 414" stroke="#fff" stroke-width="17" stroke-linecap="round" fill="none"/>
<circle cx="345.500" cy="437.500" r="10" fill="#fff"/>
<path d="M378 458 C392 446 402 440 415 432" stroke="#fff" stroke-width="17" stroke-linecap="round" fill="none"/>
<circle cx="452.500" cy="418.500" r="10" fill="#fff"/>
<path d="M492 413 C520 413 540 424 556 436" stroke="#fff" stroke-width="17" stroke-linecap="round" fill="none"/>
<circle cx="586.500" cy="479.500" r="10" fill="#fff"/>
<circle cx="709" cy="479.500" r="9" fill="#fff"/>
<path d="M602 515 C604 500 620 495 640 495 C660 495 668 503 662 515Z" fill="#fff"/>
<path d="M176 442 C200 430 225 427 250 428 C300 430 340 470 344 515 L176 515Z" fill="#fff"/>
<path d="M376 514 C400 500 420 486 434.600 476.600 C455 463 475 452 493 446.500 C510 442 528 449 542 462 C556 475 562 495 556.700 515 L376 515Z" fill="#fff"/>
<path d="M180 515 C186 480 210 457 242 457 C262 457 280 470 292 490 L300 515Z" fill="url(#tl)"/>
<path d="M255 458 C290 462 310 488 314 515 L290 515 C292 500 280 470 255 458Z" fill="#1a2b58"/>
<path d="M242 457 C275 455 308 480 314 515 L286 515 C284 490 268 465 242 457Z" fill="#1a2b58"/>
<path d="M242 457 C274 462 295 490 298 515 L240 515 L262 484Z" fill="#3b7f9f"/>
<path d="M242 515 C246 500 252 490 260 483 L268 490 C262 498 258 506 257 515Z" fill="#1a2b58"/>
<path d="M257 515 C258 505 262 497 268 490 C274 497 277 505 278 515Z" fill="#fff"/>
<ellipse cx="216" cy="512" rx="4" ry="3.500" fill="#fff"/>
<path d="M401 515 C425 502 452 486 470 477.500 C475 475 481 475.500 486 478 L509 515Z" fill="url(#tl)"/>
<path d="M484 479 L497 476 C506 488 513 500 518 515 L503 515 C499 501 493 490 484 479Z" fill="#1a2b58"/>
<path d="M434 509.500 C446 503 462 497 477 494 C481 494 481.500 499 477 500 C462 503 448 507 434 509.500Z" fill="#fff" stroke="#fff" stroke-width="1.500" stroke-linejoin="round"/>
</g>
<g font-family="'DejaVu Sans','Liberation Sans',sans-serif" fill="#050505" stroke="#050505" stroke-linejoin="round" stroke-linecap="round" stroke-width="3.200">
<text y="318" font-size="41"><tspan x="404" y="316" font-size="44" textLength="42" lengthAdjust="spacingAndGlyphs">@</tspan><tspan x="452" y="317.500" font-size="32" textLength="42" lengthAdjust="spacingAndGlyphs">M</tspan><tspan x="493.500" y="317" textLength="32" font-size="39" lengthAdjust="spacingAndGlyphs">in</tspan><tspan x="526.500" y="317" textLength="21" font-size="38" lengthAdjust="spacingAndGlyphs">t</tspan><tspan x="546.500" y="318" textLength="101.500" lengthAdjust="spacingAndGlyphs">UwU</tspan></text>
<text y="357" font-size="41" font-style="oblique"><tspan x="456" y="358" font-size="46" textLength="52" lengthAdjust="spacingAndGlyphs">#</tspan><tspan x="511.500" y="357" textLength="51" lengthAdjust="spacingAndGlyphs">hd</tspan><tspan x="564" y="357" font-size="30" textLength="68" lengthAdjust="spacingAndGlyphs">247</tspan></text>
</g>
</svg>
<div class="a" style="left:704px;top:72.700px;width:14px;height:441.700px;background:linear-gradient(90deg,#2a2a2a,#3e3e3e 50%,#2a2a2a)"></div>
<div class="a" style="left:707.5px;top:75.0px;border:3.500px solid transparent;border-bottom:5px solid #8a8a8a;border-top:0"></div>
<div class="a" style="left:707.5px;top:506.0px;border:3.500px solid transparent;border-top:5px solid #8a8a8a;border-bottom:0"></div>
<div class="a" style="left:705px;top:224.800px;width:12.200px;height:45.200px;background:#6c6c6c;border-radius:3px"></div>
<div class="a" style="left:176px;top:514.400px;width:543px;height:13.800px;background:linear-gradient(#2a2a2a,#3e3e3e 50%,#2a2a2a)"></div>
<div class="a" style="left:178.0px;top:517.8px;border:3.500px solid transparent;border-right:5px solid #8a8a8a;border-left:0"></div>
<div class="a" style="left:712.0px;top:517.8px;border:3.500px solid transparent;border-left:5px solid #8a8a8a;border-right:0"></div>
<div class="a" style="left:361px;top:515.600px;width:63.700px;height:11.600px;background:#6c6c6c;border-radius:3px"></div>
<div class="a" style="left:718px;top:72px;width:1px;height:458px;background:#1f2a35"></div><div class="a" style="left:721.500px;top:56px;width:300px;height:474px;background:#232323"></div>
<div class="a" style="left:1021px;top:56px;width:3px;height:474px;background:#1f1f1f"></div>
<div class="a" style="left:721.5px;top:56.5px;width:299.5px;height:1px;background:#3a6f9f"></div><div class="a" style="left:721.5px;top:57.5px;width:299.5px;height:14.500px;background:#363535"></div><div class="t" style="left:844.9px;top:61.6px;font-size:8.30px;color:#d0d0d0;letter-spacing:-0.03px;">Hoa tiêu</div><svg class="a" style="left:999.5px;top:61.0px" width="7" height="7" viewBox="0 0 8 8"><path d="M3.500 1.500H.7v5.800h5.800V4.500" fill="none" stroke="#bdbdbd" stroke-width="1.100"/><path d="M4.500 .5h3v3M7.300 .7L4 4" fill="none" stroke="#bdbdbd" stroke-width="1.100"/></svg><svg class="a" style="left:1011.0px;top:61.0px" width="8" height="8" viewBox="0 0 8 8"><path d="M1.200 1.200l5.600 5.600M6.800 1.200L1.200 6.800" stroke="#d8d8d8" stroke-width="1.800"/></svg>
<div class="btn" style="left:725.0px;top:74.800px;width:17.600px;height:17.400px;"><svg width="18" height="18" viewBox="-1.300 -1.500 20.600 20.600"><circle cx="7.800" cy="7.800" r="4.200" fill="none" stroke="#e8e8e8" stroke-width="1.300"/><path d="M10.800 10.800l3.700 3.700" stroke="#e8e8e8" stroke-width="1.800"/><path d="M7 6.300l1-.7v4.400" stroke="#e8e8e8" stroke-width="1" fill="none"/></svg></div>
<div class="a" style="left:746.5px;top:78.0px;width:1px;height:11px;background:#4a4a4a"></div>
<div class="btn" style="left:750.7px;top:74.800px;width:17.600px;height:17.400px;"><svg width="18" height="18" viewBox="-1.300 -1.500 20.600 20.600"><circle cx="7.800" cy="7.800" r="4.200" fill="none" stroke="#e8e8e8" stroke-width="1.300"/><path d="M10.800 10.800l3.700 3.700" stroke="#e8e8e8" stroke-width="1.800"/><path d="M5.800 7.800h4M7.800 5.800v4" stroke="#e8e8e8" stroke-width="1.100"/></svg></div>
<div class="btn" style="left:771.0px;top:74.800px;width:17.600px;height:17.400px;"><svg width="18" height="18" viewBox="-1.300 -1.500 20.600 20.600"><rect x="4" y="4.500" width="10.500" height="9.500" fill="none" stroke="#d8d8d8" stroke-width="1.100"/><path d="M5.500 8V6h2M13 8V6h-2M5.500 10.500v2h2M13 10.500v2h-2" stroke="#e8e8e8" stroke-width="1.100" fill="none"/></svg></div>
<div class="btn" style="left:791.0px;top:74.800px;width:17.600px;height:17.400px;"><svg width="18" height="18" viewBox="-1.300 -1.500 20.600 20.600"><circle cx="7.800" cy="7.800" r="4.200" fill="none" stroke="#e8e8e8" stroke-width="1.300"/><path d="M10.800 10.800l3.700 3.700" stroke="#e8e8e8" stroke-width="1.800"/><path d="M5.800 7.800h4" stroke="#e8e8e8" stroke-width="1.100"/></svg></div>
<div class="a" style="left:812.5px;top:78.0px;width:1px;height:11px;background:#4a4a4a"></div>
<div class="btn" style="left:816.8px;top:74.800px;width:17.600px;height:17.400px;"><svg width="18" height="18" viewBox="-1.300 -1.500 20.600 20.600"><path d="M13.800 6.500A5.500 5.500 0 1 1 7 4" fill="none" stroke="#e8e8e8" stroke-width="1.300"/><path d="M4.500 3l3.200.3-1 3z" fill="#e8e8e8"/><path d="M6.500 8l4.500-1.200 1 3.700-4.500 1.200z" fill="#e8e8e8"/></svg></div>
<div class="btn" style="left:837.0px;top:74.800px;width:17.600px;height:17.400px;background:#222;border-color:#555;"><svg width="18" height="18" viewBox="-1.300 -1.500 20.600 20.600"><rect x="5.500" y="6" width="7" height="6" fill="#f2f2f2"/><path d="M3.500 4l2.500 2.500M14.500 4L12 6.500M3.500 14L6 11.500M14.500 14L12 11.500" stroke="#f2f2f2" stroke-width="1.300"/></svg></div>
<div class="btn" style="left:857.0px;top:74.800px;width:17.600px;height:17.400px;"><svg width="18" height="18" viewBox="-1.300 -1.500 20.600 20.600"><path d="M4.200 6.500A5.500 5.500 0 1 0 11 4" fill="none" stroke="#e8e8e8" stroke-width="1.300"/><path d="M13.500 3l-3.200.3 1 3z" fill="#e8e8e8"/><path d="M11.500 8L7 6.800l-1 3.700 4.500 1.200z" fill="#e8e8e8"/></svg></div>
<div class="a" style="left:878.5px;top:78.0px;width:1px;height:11px;background:#4a4a4a"></div>
<div class="btn" style="left:883.0px;top:74.800px;width:17.600px;height:17.400px;"><svg width="18" height="18" viewBox="-1.300 -1.500 20.600 20.600"><path d="M5 8v6h3V8M10.500 9v5h3V9z" fill="none" stroke="#e8e8e8" stroke-width="1.200"/><rect x="5" y="8" width="3" height="6" fill="#e8e8e8"/><path d="M5.500 6.500C6 3.500 12 3.500 12.500 6.500" fill="none" stroke="#e8e8e8" stroke-width="1.200"/><path d="M11 6l1.600 1.500L14 5.800" fill="none" stroke="#e8e8e8" stroke-width="1"/></svg></div>
<div class="a" style="left:721.500px;top:94.300px;width:299.500px;height:20px;background:#444"></div>
<div class="a" style="left:863px;top:95px;width:19px;height:19px;background:#fff"><div class="a" style="left:4px;top:8px;width:3px;height:3px;background:#e0334a"></div><div class="a" style="left:3px;top:11px;width:10px;height:1.500px;background:#58c8a0"></div><div class="a" style="left:8px;top:9.500px;width:4px;height:1.500px;background:#7fd8c0"></div></div>
<div class="a" style="left:721.5px;top:117.5px;width:299.5px;height:1px;background:#3a6f9f"></div><div class="a" style="left:721.5px;top:118.5px;width:299.5px;height:14.500px;background:#363535"></div><div class="t" style="left:853.5px;top:122.5px;font-size:8.30px;color:#d0d0d0;letter-spacing:-0.39px;">Lớp</div><svg class="a" style="left:999.5px;top:122.0px" width="7" height="7" viewBox="0 0 8 8"><path d="M3.500 1.500H.7v5.800h5.800V4.500" fill="none" stroke="#bdbdbd" stroke-width="1.100"/><path d="M4.500 .5h3v3M7.300 .7L4 4" fill="none" stroke="#bdbdbd" stroke-width="1.100"/></svg><svg class="a" style="left:1011.0px;top:122.0px" width="8" height="8" viewBox="0 0 8 8"><path d="M1.200 1.200l5.600 5.600M6.800 1.200L1.200 6.800" stroke="#d8d8d8" stroke-width="1.800"/></svg>
<div class="a" style="left:721.500px;top:117.500px;width:299.500px;height:1.500px;background:#3a6f9f"></div>
<div class="t" style="left:727.0px;top:140.3px;font-size:8.30px;color:#d8d8d8;letter-spacing:-0.04px;">Độ trong</div>
<div class="a" style="left:802px;top:138px;width:176.500px;height:11.300px;background:linear-gradient(90deg,#6ebcf8,#4c92d4)"></div>
<div class="t" style="left:984.0px;top:140.3px;font-size:8.30px;color:#d8d8d8;letter-spacing:-0.25px;">100 %</div>
<div class="t" style="left:727.0px;top:159.0px;font-size:8.30px;color:#d8d8d8;letter-spacing:-0.10px;">Pha trộn</div>
<div class="a" style="left:802.800px;top:155.600px;width:214.600px;height:15px;background:#474747;border-radius:2px"></div>
<div class="t" style="left:805.0px;top:159.0px;font-size:8.30px;color:#d0d0d0;letter-spacing:-0.32px;">Bình thường</div>
<div class="a" style="left:1008.700px;top:161.500px;border:3px solid transparent;border-top:4px solid #999;border-bottom:0"></div>
<div class="a" style="left:729.0px;top:178.400px;width:8px;height:8px;border:1px solid #a8a8a8;background:#232323"></div>
<div class="t" style="left:741.0px;top:178.3px;font-size:8.30px;color:#e0e0e0;letter-spacing:-0.15px;">Bảo vệ alpha</div>
<div class="a" style="left:828.0px;top:178.400px;width:8px;height:8px;border:1px solid #a8a8a8;background:#232323"></div>
<div class="t" style="left:840.0px;top:178.3px;font-size:8.30px;color:#e0e0e0;letter-spacing:-0.25px;">Xén bớt</div>
<div class="a" style="left:926.3px;top:178.400px;width:8px;height:8px;border:1px solid #a8a8a8;background:#232323"></div>
<div class="t" style="left:938.0px;top:178.3px;font-size:8.30px;color:#e0e0e0;letter-spacing:-0.42px;">Khóa</div>
<div class="a" style="left:724.700px;top:193.300px;width:280.700px;height:212.700px;background:#484848"></div>
<div class="a" style="left:724.700px;top:193.3px;width:280.700px;height:30px;background:#3c3c3c"></div>
<div class="a" style="left:724.700px;top:193.3px;width:280.700px;height:28.700px;background:#5b5b5b"></div>
<div class="a" style="left:739px;top:193.3px;width:266.400px;height:28.700px;background:#529bd8"></div>
<div class="a" style="left:727.500px;top:204.0px;width:7px;height:7px;border-radius:50%;background:#dcdcdc"></div>
<div class="a" style="left:750px;top:195.2px;width:26px;height:25px;background:#fff;background-image:linear-gradient(45deg,#dcdcdc 25%,transparent 25%,transparent 75%,#dcdcdc 75%),linear-gradient(45deg,#dcdcdc 25%,transparent 25%,transparent 75%,#dcdcdc 75%);background-size:6.500px 6.500px;background-position:0 0,3.250px 3.250px;"></div>
<div class="t" style="left:788.6px;top:203.9px;font-size:9.20px;color:#fff;font-weight:bold;letter-spacing:-0.02px;">Lớp6</div>
<svg class="a" style="left:989.500px;top:200.7px" width="14" height="14" viewBox="0 0 10 10"><circle cx="5" cy="5" r="2.300" fill="none" stroke="#fff" stroke-width="1.800"/><path d="M5 .3v9.400M.3 5h9.400M1.700 1.700l6.600 6.600M8.300 1.700L1.700 8.300" stroke="#fff" stroke-width="1.500"/><circle cx="5" cy="5" r="1.100" fill="#529bd8"/></svg>
<div class="a" style="left:724.700px;top:223.3px;width:280.700px;height:30px;background:#3c3c3c"></div>
<div class="a" style="left:724.700px;top:223.3px;width:280.700px;height:28.700px;background:#5b5b5b"></div>
<div class="a" style="left:727.500px;top:234.0px;width:7px;height:7px;border-radius:50%;background:#dcdcdc"></div>
<div class="a" style="left:750px;top:225.2px;width:26px;height:25px;background:#fff;background-image:linear-gradient(45deg,#dcdcdc 25%,transparent 25%,transparent 75%,#dcdcdc 75%),linear-gradient(45deg,#dcdcdc 25%,transparent 25%,transparent 75%,#dcdcdc 75%);background-size:6.500px 6.500px;background-position:0 0,3.250px 3.250px;"><div class="a" style="left:10px;top:10px;width:5px;height:1.500px;background:#8fc0b4"></div></div>
<div class="t" style="left:788.6px;top:233.9px;font-size:9.20px;color:#f0f0f0;letter-spacing:-0.45px;">Lớp3</div>
<div class="a" style="left:724.700px;top:253.4px;width:280.700px;height:30px;background:#3c3c3c"></div>
<div class="a" style="left:724.700px;top:253.4px;width:280.700px;height:28.700px;background:#5b5b5b"></div>
<div class="a" style="left:727.500px;top:264.1px;width:7px;height:7px;border-radius:50%;background:#dcdcdc"></div>
<div class="a" style="left:750px;top:255.3px;width:26px;height:25px;background:#fff;background-image:linear-gradient(45deg,#dcdcdc 25%,transparent 25%,transparent 75%,#dcdcdc 75%),linear-gradient(45deg,#dcdcdc 25%,transparent 25%,transparent 75%,#dcdcdc 75%);background-size:6.500px 6.500px;background-position:0 0,3.250px 3.250px;"><div class="a" style="left:10px;top:9px;width:5px;height:2px;background:#555"></div></div>
<div class="t" style="left:788.6px;top:264.0px;font-size:9.20px;color:#f0f0f0;letter-spacing:-0.45px;">Lớp3</div>
<div class="a" style="left:724.700px;top:283.4px;width:280.700px;height:30px;background:#3c3c3c"></div>
<div class="a" style="left:724.700px;top:283.4px;width:280.700px;height:28.700px;background:#5b5b5b"></div>
<div class="a" style="left:727.500px;top:294.1px;width:7px;height:7px;border-radius:50%;background:#dcdcdc"></div>
<div class="a" style="left:750px;top:285.3px;width:26px;height:25px;background:#fff;background-image:linear-gradient(45deg,#dcdcdc 25%,transparent 25%,transparent 75%,#dcdcdc 75%),linear-gradient(45deg,#dcdcdc 25%,transparent 25%,transparent 75%,#dcdcdc 75%);background-size:6.500px 6.500px;background-position:0 0,3.250px 3.250px;"><div class="a" style="left:3px;top:10px;width:5px;height:1.500px;background:#7fb4a8"></div></div>
<div class="t" style="left:788.6px;top:294.0px;font-size:9.20px;color:#f0f0f0;letter-spacing:-0.45px;">Lớp2</div>
<div class="a" style="left:724.700px;top:313.4px;width:280.700px;height:30px;background:#3c3c3c"></div>
<div class="a" style="left:724.700px;top:313.4px;width:280.700px;height:28.700px;background:#5b5b5b"></div>
<div class="a" style="left:727.500px;top:324.1px;width:7px;height:7px;border-radius:50%;background:#dcdcdc"></div>
<div class="a" style="left:750px;top:315.3px;width:26px;height:25px;background:#fff;background-image:linear-gradient(45deg,#dcdcdc 25%,transparent 25%,transparent 75%,#dcdcdc 75%),linear-gradient(45deg,#dcdcdc 25%,transparent 25%,transparent 75%,#dcdcdc 75%);background-size:6.500px 6.500px;background-position:0 0,3.250px 3.250px;"><div class="a" style="left:5px;top:9px;width:5px;height:2px;background:#3a4a8a"></div></div>
<div class="t" style="left:788.6px;top:324.0px;font-size:9.20px;color:#f0f0f0;letter-spacing:-0.45px;">Lớp2</div>
<div class="a" style="left:724.700px;top:343.5px;width:280.700px;height:30px;background:#3c3c3c"></div>
<div class="a" style="left:724.700px;top:343.5px;width:280.700px;height:28.700px;background:#5b5b5b"></div>
<div class="a" style="left:727.500px;top:354.2px;width:7px;height:7px;border-radius:50%;background:#dcdcdc"></div>
<div class="a" style="left:750px;top:345.4px;width:26px;height:25px;background:#fff;background-image:linear-gradient(45deg,#dcdcdc 25%,transparent 25%,transparent 75%,#dcdcdc 75%),linear-gradient(45deg,#dcdcdc 25%,transparent 25%,transparent 75%,#dcdcdc 75%);background-size:6.500px 6.500px;background-position:0 0,3.250px 3.250px;"><div class="a" style="left:1px;top:8px;width:16px;height:6px;background:#c8f7ea"></div></div>
<div class="t" style="left:788.6px;top:354.1px;font-size:9.20px;color:#f0f0f0;letter-spacing:-0.45px;">Lớp1</div>
<div class="a" style="left:1007px;top:193.300px;width:13px;height:212.700px;background:linear-gradient(90deg,#2c2c2c,#3a3a3a 50%,#2c2c2c);border-radius:4px"></div>
<div class="a" style="left:1010.0px;top:194.5px;border:3.500px solid transparent;border-bottom:5px solid #8a8a8a;border-top:0"></div>
<div class="a" style="left:1010.0px;top:400.0px;border:3.500px solid transparent;border-top:5px solid #8a8a8a;border-bottom:0"></div>
<div class="a" style="left:1007.500px;top:201.500px;width:12px;height:195px;background:linear-gradient(90deg,#6a6a6a,#7c7c7c 50%,#686868);border-radius:4px"></div>
<div class="btn" style="left:727.0px;top:409.200px;width:17.0px;height:16.800px"><svg width="18" height="18" viewBox="0 .5 18 18"><path d="M4 3.500h6.500l3.500 3.500v7.500H4z" fill="none" stroke="#e8e8e8" stroke-width="1.300"/><path d="M10.300 3.500v3.700h3.700" fill="none" stroke="#e8e8e8" stroke-width="1"/></svg></div>
<div class="btn" style="left:747.5px;top:409.200px;width:17.0px;height:16.800px"><svg width="18" height="18" viewBox="0 .5 18 18"><path d="M4 3.500h6.500l3.500 3.500v7.500H4z" fill="none" stroke="#e8e8e8" stroke-width="1.300"/><path d="M10.300 3.500v3.700h3.700" fill="none" stroke="#e8e8e8" stroke-width="1"/><text x="8.800" y="13.200" font-size="7.500" font-weight="bold" font-family="Liberation Sans,sans-serif" fill="#e8e8e8" text-anchor="middle">8</text></svg></div>
<div class="btn" style="left:767.4px;top:409.200px;width:17.4px;height:16.800px"><svg width="18" height="18" viewBox="0 .5 18 18"><path d="M4 3.500h6.500l3.500 3.500v7.500H4z" fill="none" stroke="#e8e8e8" stroke-width="1.300"/><path d="M10.300 3.500v3.700h3.700" fill="none" stroke="#e8e8e8" stroke-width="1"/><text x="8.800" y="13.200" font-size="7.500" font-weight="bold" font-family="Liberation Sans,sans-serif" fill="#e8e8e8" text-anchor="middle">1</text></svg></div>
<div class="btn" style="left:787.7px;top:409.200px;width:22.3px;height:16.800px"><svg width="23" height="18" viewBox="0 .5 23 18"><path d="M3.500 3.500h6l3 3V9M8.500 14.500h-5v-11" fill="none" stroke="#e8e8e8" stroke-width="1.300"/><path d="M11.500 10.500v5.500M8.800 13.200h5.500" stroke="#e8e8e8" stroke-width="1.600"/><path d="M16.500 8h5l-2.500 3z" fill="#e8e8e8"/></svg></div>
<div class="btn" style="left:813.0px;top:409.200px;width:17.0px;height:16.800px"><svg width="18" height="18" viewBox="0 .5 18 18"><path d="M3.500 5h4l1 1.500h6v7.500h-11z" fill="#e8e8e8"/></svg></div>
<div class="a" style="left:834.5px;top:412.0px;width:1px;height:11px;background:#4a4a4a"></div>
<div class="btn" style="left:838.3px;top:409.200px;width:17.0px;height:16.800px"><svg width="18" height="18" viewBox="0 .5 18 18"><rect x="4" y="6.500" width="7.500" height="7.500" fill="none" stroke="#e8e8e8" stroke-width="1.100"/><path d="M6.500 6.500V4H14v7.500h-2.500" fill="none" stroke="#e8e8e8" stroke-width="1.100"/></svg></div>
<div class="btn" style="left:858.9px;top:409.200px;width:17.0px;height:16.800px"><svg width="18" height="18" viewBox="0 .5 18 18"><rect x="4" y="4" width="4" height="3.500" fill="#e8e8e8"/><rect x="4" y="10.500" width="4" height="3.500" fill="#e8e8e8"/><rect x="11" y="7" width="4" height="4" fill="#e8e8e8"/><path d="M8 5.800h1.500v6.500H8M9.500 9H11" stroke="#e8e8e8" stroke-width="1" fill="none"/></svg></div>
<div class="a" style="left:880.4px;top:412.0px;width:1px;height:11px;background:#4a4a4a"></div>
<div class="btn" style="left:883.5px;top:409.200px;width:17.5px;height:16.800px"><svg width="19" height="18" viewBox="0 .5 19 18"><path d="M4.500 6h9M7.500 6V4.500h3V6M5.500 6.200v8h7v-8" fill="none" stroke="#e8e8e8" stroke-width="1.200"/><path d="M7.500 7.500v5.500M9 7.500v5.500M10.500 7.500v5.500" stroke="#e8e8e8" stroke-width=".9"/></svg></div>
<div class="a" style="left:721.5px;top:434.2px;width:299.5px;height:1px;background:#3a6f9f"></div><div class="a" style="left:721.5px;top:435.2px;width:299.5px;height:14.500px;background:#363535"></div><div class="t" style="left:841.6px;top:439.2px;font-size:8.30px;color:#d0d0d0;letter-spacing:-0.11px;">Reference</div><svg class="a" style="left:999.5px;top:438.7px" width="7" height="7" viewBox="0 0 8 8"><path d="M3.500 1.500H.7v5.800h5.800V4.500" fill="none" stroke="#bdbdbd" stroke-width="1.100"/><path d="M4.500 .5h3v3M7.300 .7L4 4" fill="none" stroke="#bdbdbd" stroke-width="1.100"/></svg><svg class="a" style="left:1011.0px;top:438.7px" width="8" height="8" viewBox="0 0 8 8"><path d="M1.200 1.200l5.600 5.600M6.800 1.200L1.200 6.800" stroke="#d8d8d8" stroke-width="1.800"/></svg>
<div class="btn" style="left:725.3px;top:453.200px;width:17.300px;height:17px;"><svg width="18" height="18" viewBox="-1.300 -1.500 20.600 20.600"><path d="M5 11.500h8a2.300 2.300 0 0 0 .3-4.600 3.200 3.200 0 0 0-6-.9A2.700 2.700 0 0 0 5 11.500z" fill="#f2f2f2"/><path d="M9 9v5.500M7 12.500l2 2.300 2-2.300" stroke="#f2f2f2" stroke-width="1.400" fill="none"/></svg></div>
<div class="btn" style="left:745.9px;top:453.200px;width:17.300px;height:17px;"><svg width="18" height="18" viewBox="-1.300 -1.500 20.600 20.600"><path d="M3.500 5h4l1 1.500h5V8h-8l-2 5.500z" fill="#e8e8e8"/><path d="M6 9h9.500l-2 5h-9.500z" fill="#e8e8e8"/></svg></div>
<div class="btn" style="left:765.8px;top:453.200px;width:17.300px;height:17px;background:#262626;border-color:#4e4e4e;"><svg width="18" height="18" viewBox="-1.300 -1.500 20.600 20.600"><path d="M6 6l6 6M12 6l-6 6" stroke="#e8e8e8" stroke-width="1.600"/></svg></div>
<div class="a" style="left:787.1px;top:456.5px;width:1px;height:11px;background:#4a4a4a"></div>
<div class="btn" style="left:791.0px;top:453.200px;width:17.300px;height:17px;background:#262626;border-color:#4e4e4e;"><svg width="18" height="18" viewBox="-1.300 -1.500 20.600 20.600"><circle cx="7.800" cy="7.800" r="4.200" fill="none" stroke="#e8e8e8" stroke-width="1.300"/><path d="M10.800 10.800l3.700 3.700" stroke="#e8e8e8" stroke-width="1.800"/><path d="M5.800 7.800h4M7.800 5.800v4" stroke="#e8e8e8" stroke-width="1.100"/></svg></div>
<div class="btn" style="left:811.4px;top:453.200px;width:17.300px;height:17px;background:#262626;border-color:#4e4e4e;"><svg width="18" height="18" viewBox="-1.300 -1.500 20.600 20.600"><rect x="4" y="4.500" width="10.500" height="9.500" fill="none" stroke="#d8d8d8" stroke-width="1.100"/><path d="M5.500 8V6h2M13 8V6h-2M5.500 10.500v2h2M13 10.500v2h-2" stroke="#e8e8e8" stroke-width="1.100" fill="none"/></svg></div>
<div class="btn" style="left:831.3px;top:453.200px;width:17.300px;height:17px;background:#262626;border-color:#4e4e4e;"><svg width="18" height="18" viewBox="-1.300 -1.500 20.600 20.600"><circle cx="7.800" cy="7.800" r="4.200" fill="none" stroke="#e8e8e8" stroke-width="1.300"/><path d="M10.800 10.800l3.700 3.700" stroke="#e8e8e8" stroke-width="1.800"/><path d="M5.800 7.800h4" stroke="#e8e8e8" stroke-width="1.100"/></svg></div>
<div class="a" style="left:852.6px;top:456.5px;width:1px;height:11px;background:#4a4a4a"></div>
<div class="btn" style="left:857.3px;top:453.200px;width:17.300px;height:17px;background:#262626;border-color:#4e4e4e;"><svg width="18" height="18" viewBox="0.500 0.500 19 19"><path d="M13.800 3.300c1-1 2.700.7 1.700 1.700l-2 2 .7.700-1 1-.7-.7-5.300 5.300-2.200.9-.5-.5.900-2.200 5.300-5.300-.7-.7 1-1 .7.700z" fill="none" stroke="#f2f2f2" stroke-width="1.300"/></svg></div>
<div class="btn" style="left:877.2px;top:453.200px;width:17.300px;height:17px;background:#4d9be0;border-color:#3c82c0;"><svg width="18" height="18" viewBox="0.500 0.500 19 19"><path d="M6.300 16.500c-1.200-1.600-2.600-3.400-3.200-4.700-.4-.9.700-1.500 1.400-.7l1.300 1.500V5.500c0-1 1.500-1 1.500 0v4h.5V4.200c0-1 1.500-1 1.500 0v5.300h.5V4.800c0-1 1.500-1 1.500 0v5h.5V6.500c0-1 1.500-1 1.500 0v6c0 1.800-.5 2.800-1.300 4z" fill="#f2f2f2"/></svg></div>
<div class="a" style="left:898.5px;top:456.5px;width:1px;height:11px;background:#4a4a4a"></div>
<div class="btn" style="left:903.2px;top:453.200px;width:17.300px;height:17px;background:#262626;border-color:#4e4e4e;"><svg width="18" height="18" viewBox="-1.300 -1.500 20.600 20.600"><path d="M13.800 6.500A5.500 5.500 0 1 1 7 4" fill="none" stroke="#e8e8e8" stroke-width="1.300"/><path d="M4.500 3l3.200.3-1 3z" fill="#e8e8e8"/><path d="M6.500 8l4.500-1.200 1 3.700-4.500 1.200z" fill="#e8e8e8"/></svg></div>
<div class="btn" style="left:923.0px;top:453.200px;width:17.300px;height:17px;background:#262626;border-color:#4e4e4e;"><svg width="18" height="18" viewBox="-1.300 -1.500 20.600 20.600"><rect x="5.500" y="6" width="7" height="6" fill="#f2f2f2"/><path d="M3.500 4l2.500 2.500M14.500 4L12 6.500M3.500 14L6 11.500M14.500 14L12 11.500" stroke="#f2f2f2" stroke-width="1.300"/></svg></div>
<div class="btn" style="left:943.0px;top:453.200px;width:17.300px;height:17px;background:#262626;border-color:#4e4e4e;"><svg width="18" height="18" viewBox="-1.300 -1.500 20.600 20.600"><path d="M4.200 6.500A5.500 5.500 0 1 0 11 4" fill="none" stroke="#e8e8e8" stroke-width="1.300"/><path d="M13.500 3l-3.200.3 1 3z" fill="#e8e8e8"/><path d="M11.500 8L7 6.800l-1 3.700 4.500 1.200z" fill="#e8e8e8"/></svg></div>
<div class="a" style="left:964.3px;top:456.5px;width:1px;height:11px;background:#4a4a4a"></div>
<div class="btn" style="left:968.4px;top:453.200px;width:17.300px;height:17px;background:#262626;border-color:#4e4e4e;"><svg width="18" height="18" viewBox="-1.300 -1.500 20.600 20.600"><path d="M5 8v6h3V8M10.500 9v5h3V9z" fill="none" stroke="#e8e8e8" stroke-width="1.200"/><rect x="5" y="8" width="3" height="6" fill="#e8e8e8"/><path d="M5.500 6.500C6 3.500 12 3.500 12.500 6.500" fill="none" stroke="#e8e8e8" stroke-width="1.200"/><path d="M11 6l1.600 1.500L14 5.800" fill="none" stroke="#e8e8e8" stroke-width="1"/></svg></div>
<div class="a" style="left:721.5px;top:477.6px;width:299.5px;height:1px;background:#3a6f9f"></div><div class="a" style="left:721.5px;top:478.6px;width:299.5px;height:14.500px;background:#363535"></div><div class="t" style="left:841.6px;top:481.8px;font-size:8.30px;color:#d0d0d0;letter-spacing:-0.28px;">Brush Size</div><svg class="a" style="left:999.5px;top:481.2px" width="7" height="7" viewBox="0 0 8 8"><path d="M3.500 1.500H.7v5.800h5.800V4.500" fill="none" stroke="#bdbdbd" stroke-width="1.100"/><path d="M4.500 .5h3v3M7.300 .7L4 4" fill="none" stroke="#bdbdbd" stroke-width="1.100"/></svg><svg class="a" style="left:1011.0px;top:481.2px" width="8" height="8" viewBox="0 0 8 8"><path d="M1.200 1.200l5.600 5.600M6.800 1.200L1.200 6.800" stroke="#d8d8d8" stroke-width="1.800"/></svg>
<div class="a" style="left:721.500px;top:492.200px;width:284.500px;height:37.800px;background:#5a5a5a;overflow:hidden">
<div class="a" style="left:30.2px;top:0;width:1px;height:38px;background:#4a4a4a"></div>
<div class="a" style="left:60.2px;top:0;width:1px;height:38px;background:#4a4a4a"></div>
<div class="a" style="left:90.2px;top:0;width:1px;height:38px;background:#4a4a4a"></div>
<div class="a" style="left:120.2px;top:0;width:1px;height:38px;background:#4a4a4a"></div>
<div class="a" style="left:150.2px;top:0;width:1px;height:38px;background:#4a4a4a"></div>
<div class="a" style="left:180.2px;top:0;width:1px;height:38px;background:#4a4a4a"></div>
<div class="a" style="left:210.2px;top:0;width:1px;height:38px;background:#4a4a4a"></div>
<div class="a" style="left:240.2px;top:0;width:1px;height:38px;background:#4a4a4a"></div>
<div class="a" style="left:270.2px;top:0;width:1px;height:38px;background:#4a4a4a"></div>
<div class="a" style="left:0;top:26.300px;width:271px;height:1px;background:#4a4a4a"></div>
<div class="a" style="left:15.1px;top:2.9px;width:0.9px;height:0.9px;border-radius:50%;background:#f4f4f4"></div>
<div class="t" style="left:13.5px;top:17.6px;font-size:7.30px;color:#e8e8e8;">1</div>
<div class="a" style="left:10.0px;top:35.9px;width:11.0px;height:11.0px;border-radius:50%;background:#f4f4f4"></div>
<div class="a" style="left:44.9px;top:2.8px;width:1.2px;height:1.2px;border-radius:50%;background:#f4f4f4"></div>
<div class="t" style="left:40.4px;top:17.6px;font-size:7.30px;color:#e8e8e8;">1.5</div>
<div class="a" style="left:38.5px;top:34.3px;width:14.0px;height:14.0px;border-radius:50%;background:#f4f4f4"></div>
<div class="a" style="left:74.6px;top:2.5px;width:1.8px;height:1.8px;border-radius:50%;background:#f4f4f4"></div>
<div class="t" style="left:73.5px;top:17.6px;font-size:7.30px;color:#e8e8e8;">2</div>
<div class="a" style="left:67.0px;top:32.6px;width:17.0px;height:17.0px;border-radius:50%;background:#f4f4f4"></div>
<div class="a" style="left:104.2px;top:2.1px;width:2.6px;height:2.6px;border-radius:50%;background:#f4f4f4"></div>
<div class="t" style="left:103.5px;top:17.6px;font-size:7.30px;color:#e8e8e8;">3</div>
<div class="a" style="left:96.5px;top:32.0px;width:18.0px;height:18.0px;border-radius:50%;background:#f4f4f4"></div>
<div class="a" style="left:133.7px;top:1.6px;width:3.6px;height:3.6px;border-radius:50%;background:#f4f4f4"></div>
<div class="t" style="left:133.5px;top:17.6px;font-size:7.30px;color:#e8e8e8;">4</div>
<div class="a" style="left:126.5px;top:32.0px;width:18.0px;height:18.0px;border-radius:50%;background:#f4f4f4"></div>
<div class="a" style="left:163.3px;top:1.2px;width:4.4px;height:4.4px;border-radius:50%;background:#f4f4f4"></div>
<div class="t" style="left:163.5px;top:17.6px;font-size:7.30px;color:#e8e8e8;">5</div>
<div class="a" style="left:156.5px;top:32.0px;width:18.0px;height:18.0px;border-radius:50%;background:#f4f4f4"></div>
<div class="a" style="left:192.4px;top:0.3px;width:6.2px;height:6.2px;border-radius:50%;background:#f4f4f4"></div>
<div class="t" style="left:193.5px;top:17.6px;font-size:7.30px;color:#e8e8e8;">7</div>
<div class="a" style="left:186.2px;top:31.7px;width:18.6px;height:18.6px;border-radius:50%;background:#f4f4f4"></div>
<div class="a" style="left:221.3px;top:-0.8px;width:8.4px;height:8.4px;border-radius:50%;background:#f4f4f4"></div>
<div class="t" style="left:221.4px;top:17.6px;font-size:7.30px;color:#e8e8e8;">10</div>
<div class="a" style="left:216.0px;top:31.5px;width:19.0px;height:19.0px;border-radius:50%;background:#f4f4f4"></div>
<div class="a" style="left:250.3px;top:-1.8px;width:10.4px;height:10.4px;border-radius:50%;background:#f4f4f4"></div>
<div class="t" style="left:251.4px;top:17.6px;font-size:7.30px;color:#e8e8e8;">12</div>
<div class="a" style="left:246.0px;top:31.5px;width:19.0px;height:19.0px;border-radius:50%;background:#f4f4f4"></div>
</div>
<div class="a" style="left:1007px;top:492.800px;width:13px;height:37.200px;background:linear-gradient(90deg,#2c2c2c,#3a3a3a 50%,#2c2c2c);border-radius:4px"></div>
<div class="a" style="left:1010.0px;top:494.5px;border:3.500px solid transparent;border-bottom:5px solid #8a8a8a;border-top:0"></div>
<div class="a" style="left:1010.0px;top:523.5px;border:3.500px solid transparent;border-top:5px solid #8a8a8a;border-bottom:0"></div>
<div class="a" style="left:1007px;top:503.600px;width:13px;height:6.200px;background:#6e6e6e;border-radius:1px"></div></div></body></html>
